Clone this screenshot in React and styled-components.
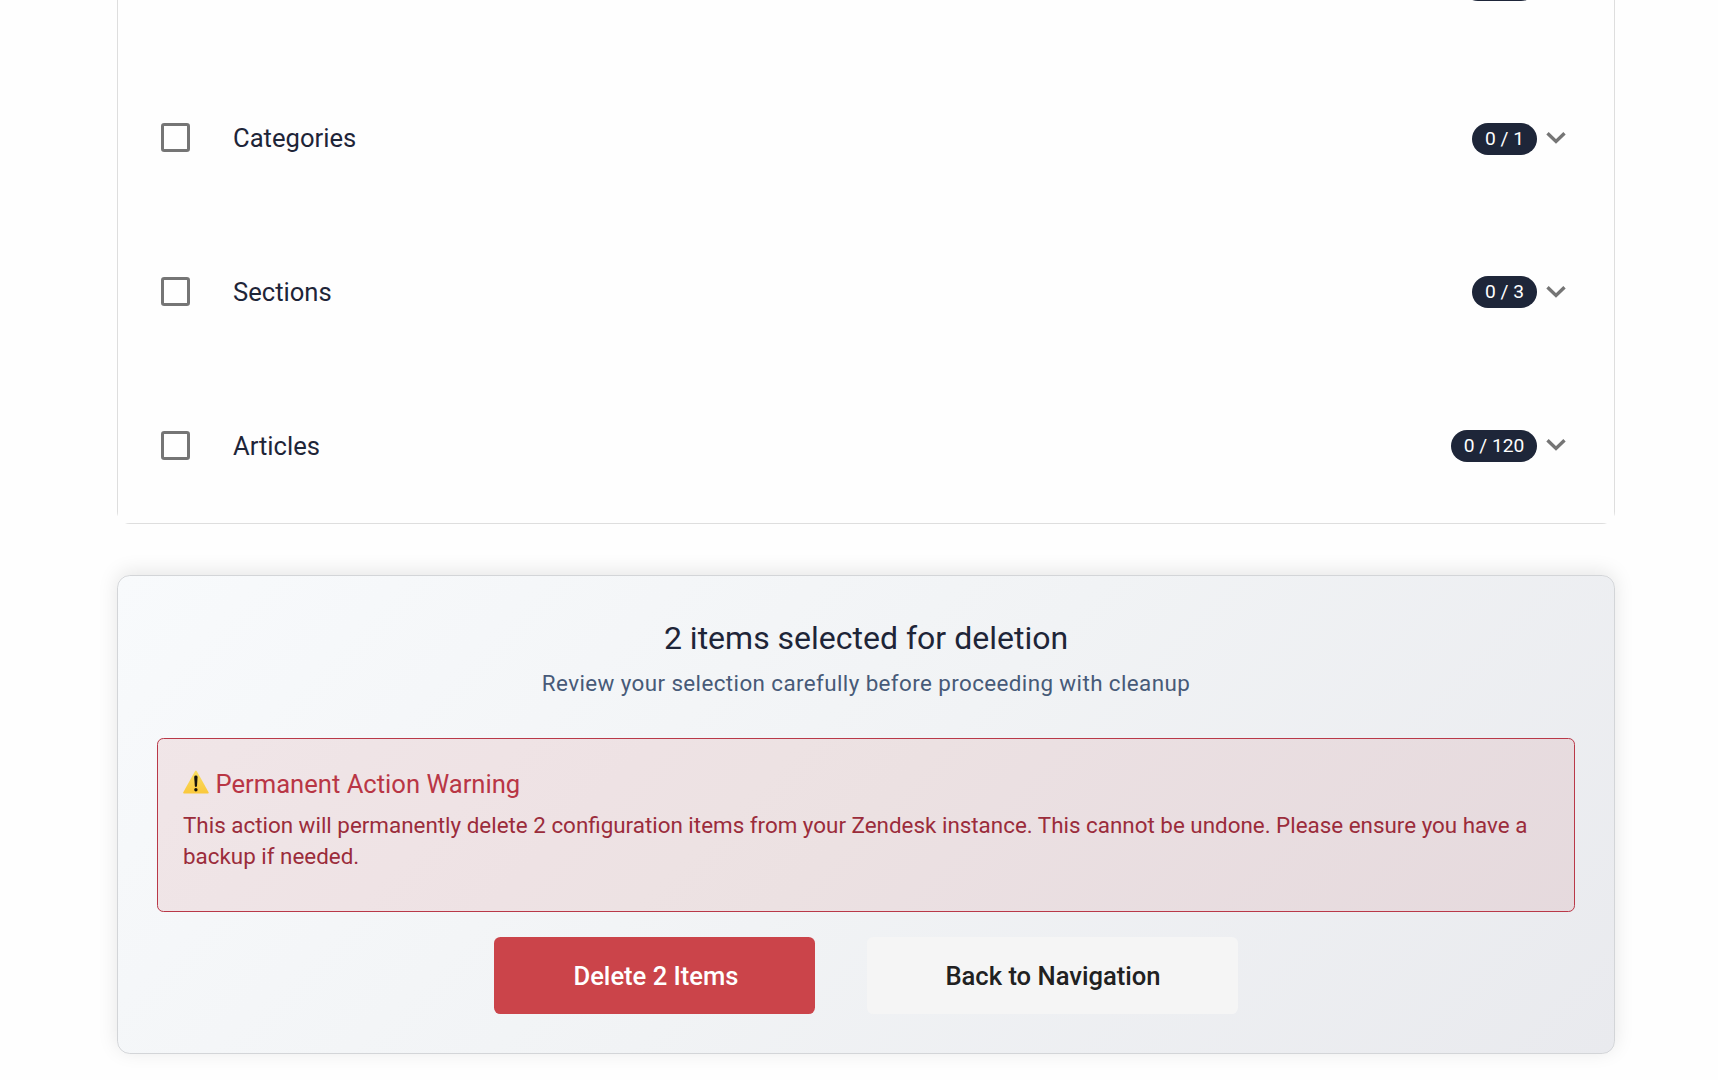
import React from "react";
import styled, { createGlobalStyle } from "styled-components";

const GlobalStyle = createGlobalStyle`
  *, *::before, *::after { box-sizing: border-box; }
  html, body { margin: 0; height: 100%; overflow: hidden; }
  body {
    background: #fefefe;
    color: #1e2538;
    font-family: Roboto, "Liberation Sans", sans-serif;
    -webkit-font-smoothing: antialiased;
  }
`;

const Page = styled.main`
  height: 1080px;
  padding: 0 103px 0 117px;
  overflow: hidden;
  display: flex;
  flex-direction: column;
`;

const ObjectList = styled.section`
  flex: none;
  height: 524px;
  padding-bottom: 0.3px;
  display: flex;
  flex-direction: column;
  justify-content: flex-end;
  border: 1px solid #dedede;
  border-top: 0;
  border-radius: 0 0 12.8px 12.8px;
`;

const Row = styled.div`
  flex: none;
  height: 153.6px;
  display: flex;
  align-items: center;
  padding: 0 48px 0 43px;
  background: #fefefe;
`;

const Checkbox = styled.span`
  width: 29px;
  height: 29px;
  margin: -1.6px 43px 0 0;
  border: 3px solid #757575;
  border-radius: 3.2px;
`;

const RowLabel = styled.span`
  flex: 1;
  margin-top: -0.6px;
  font-size: 25.6px;
  line-height: 36px;
`;

const Badge = styled.span`
  min-width: ${(p) => p.$minWidth || "65px"};
  height: 32px;
  padding: 0 12.6px;
  border-radius: 16px;
  background: #1e2639;
  color: #fff;
  font-size: 19.2px;
  line-height: 32px;
  text-align: center;
`;

const Chevron = styled.svg`
  width: 20px;
  height: 14px;
  margin: -1px 0 0 9px;
`;

const Summary = styled.section`
  flex: none;
  height: 479px;
  margin-top: 51px;
  padding: 38px 39px 39px;
  display: flex;
  flex-direction: column;
  border: 1px solid #d3d5d8;
  border-radius: 12.8px;
  background: linear-gradient(135deg, #f8fafc 0%, #f1f3f5 50%, #e9eaee 100%);
  box-shadow: 0 -3px 20px rgba(0, 0, 0, 0.1);
`;

const Title = styled.h2`
  margin: 0;
  text-align: center;
  font-size: 32px;
  font-weight: 400;
  line-height: 48px;
`;

const Subtitle = styled.p`
  margin: 0 0 34px;
  text-align: center;
  color: #475a78;
  font-size: 22.4px;
  line-height: 42px;
  letter-spacing: 0.4px;
`;

const Warning = styled.div`
  height: 174px;
  padding: 26px 25px;
  border: 1px solid #b93848;
  border-radius: 6.4px;
  background: rgba(190, 48, 42, 0.09);
`;

const WarningTitle = styled.h3`
  margin: 0 0 6px;
  display: flex;
  align-items: center;
  gap: 5.5px;
  color: #b93645;
  font-size: 25.6px;
  font-weight: 400;
  line-height: 39px;
`;

const WarningIcon = styled.svg`
  width: 27px;
  height: 24px;
  margin-top: -5.5px;
`;

const WarningText = styled.p`
  margin: 0;
  color: #9b2c3b;
  font-size: 22.4px;
  line-height: 31px;
`;

const Actions = styled.div`
  margin-top: 25px;
  display: flex;
  justify-content: center;
  gap: 52px;
`;

const Button = styled.button`
  width: ${(p) => p.$width};
  height: 77px;
  padding: 2px 0 0 ${(p) => (p.$danger ? "3px" : "1px")};
  border: 0;
  border-radius: 6.4px;
  background: ${(p) => (p.$danger ? "#cb444a" : "#f5f5f5")};
  color: ${(p) => (p.$danger ? "#fff" : "#212121")};
  font-family: inherit;
  font-size: 25.6px;
  font-weight: 500;
  line-height: 75px;
`;

const rows = [
  { label: "Categories", count: "0 / 1" },
  { label: "Sections", count: "0 / 3" },
  { label: "Articles", count: "0 / 120" },
];

function ExpandIcon() {
  return (
    <Chevron viewBox="0 0 20 14" fill="none" stroke="#757575" strokeWidth="3.4">
      <path d="M1.5 2.2 10 10.4 18.5 2.2" />
    </Chevron>
  );
}

export default function App() {
  return (
    <>
      <GlobalStyle />
      <Page>
        <ObjectList>
          <Row>
            <Checkbox />
            <RowLabel />
            <Badge $minWidth="75px" />
            <ExpandIcon />
          </Row>
          {rows.map((row) => (
            <Row key={row.label}>
              <Checkbox />
              <RowLabel>{row.label}</RowLabel>
              <Badge>{row.count}</Badge>
              <ExpandIcon />
            </Row>
          ))}
        </ObjectList>
        <Summary>
          <Title>2 items selected for deletion</Title>
          <Subtitle>Review your selection carefully before proceeding with cleanup</Subtitle>
          <Warning>
            <WarningTitle>
              <WarningIcon viewBox="0 0 27 24">
                <defs>
                  <linearGradient id="sign" x1="0" y1="0" x2="0" y2="1">
                    <stop offset="0" stopColor="#f8de63" />
                    <stop offset="1" stopColor="#fac83c" />
                  </linearGradient>
                </defs>
                <path
                  d="M12.1 1.1Q12.9.1 13.7 1.1L25.6 22.2Q26 23.4 24.9 23.5H1Q-.2 23.4.3 22.2Z"
                  fill="url(#sign)"
                />
                <path d="M11.2 7Q11.3 5.6 12.9 5.6T14.6 7L14 15.8Q13.8 17 12.9 17T11.8 15.8Z" fill="#16140d" />
                <circle cx="12.9" cy="19.8" r="1.7" fill="#16140d" />
              </WarningIcon>
              Permanent Action Warning
            </WarningTitle>
            <WarningText>
              This action will permanently delete 2 configuration items from your Zendesk instance.
              This cannot be undone. Please ensure you have a backup if needed.
            </WarningText>
          </Warning>
          <Actions>
            <Button $danger $width="321px">Delete 2 Items</Button>
            <Button $width="371px">Back to Navigation</Button>
          </Actions>
        </Summary>
      </Page>
    </>
  );
}
